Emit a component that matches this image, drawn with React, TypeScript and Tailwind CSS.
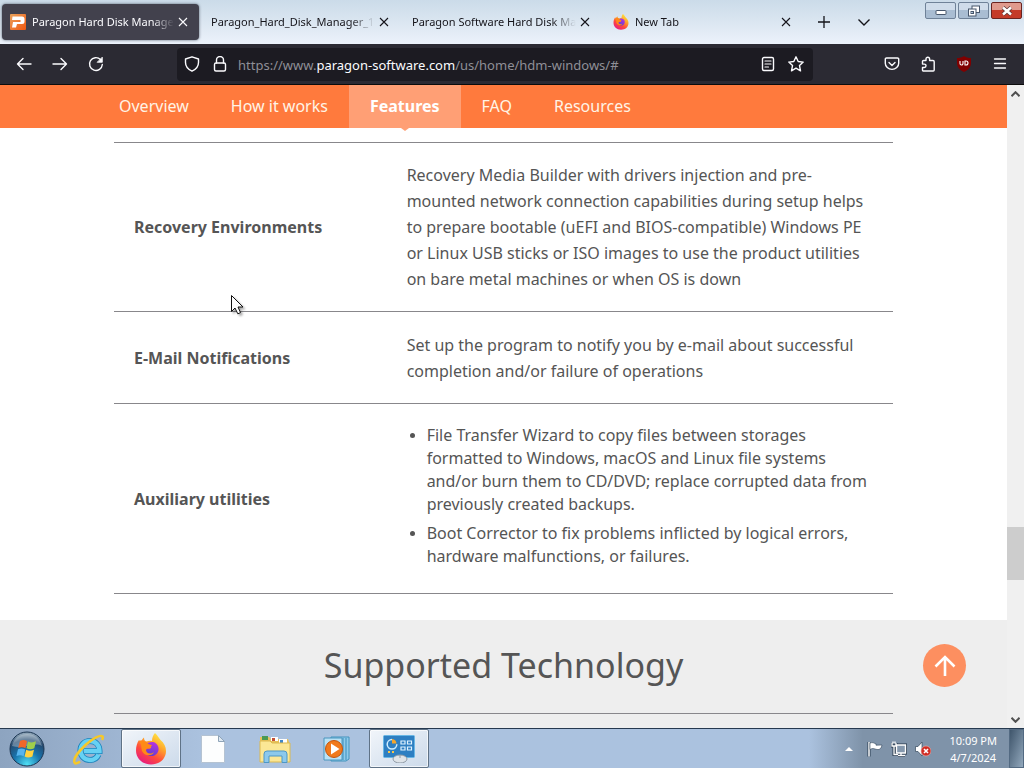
import React from "react";

const tabs = [
  { title: "Paragon Hard Disk Manager", icon: "paragon", active: true },
  { title: "Paragon_Hard_Disk_Manager_1", icon: "", active: false },
  { title: "Paragon Software Hard Disk Ma", icon: "", active: false },
  { title: "New Tab", icon: "firefox", active: false },
];

const navItems = ["Overview", "How it works", "Features", "FAQ", "Resources"];

function ParagonIcon() {
  return (
    <svg viewBox="0 0 16 16" className="size-4 shrink-0" aria-hidden="true">
      <defs>
        <linearGradient id="pg" x1="0" y1="0" x2="1" y2="1">
          <stop offset="0" stopColor="#e9a25c" />
          <stop offset="1" stopColor="#f1560f" />
        </linearGradient>
      </defs>
      <rect width="16" height="16" rx="1" fill="url(#pg)" />
      <path d="M2.500 2.500h9.500a2.500 2.500 0 0 1 2.500 2.500v2.500a2.500 2.500 0 0 1-2.500 2.500H7L6 13.500H2L3 8h7.500V6H2z" fill="#fff" />
    </svg>
  );
}

function FirefoxIcon({ className, id }: { className: string; id: string }) {
  return (
    <svg viewBox="0 0 32 32" className={className} aria-hidden="true">
      <defs>
        <linearGradient id={id + "a"} x1="0.8" y1="0" x2="0.2" y2="1">
          <stop offset="0" stopColor="#fff04a" />
          <stop offset="0.35" stopColor="#ffa42a" />
          <stop offset="0.65" stopColor="#ff4a3c" />
          <stop offset="1" stopColor="#e3158a" />
        </linearGradient>
        <linearGradient id={id + "b"} x1="0.7" y1="0" x2="0.3" y2="1">
          <stop offset="0" stopColor="#b833e1" />
          <stop offset="1" stopColor="#5b3fd0" />
        </linearGradient>
      </defs>
      <path d="M20 0c3 3 4 5 5.500 7 3.500 3 5.500 6.500 5.500 11 0 8-6.500 13.500-15 13.500S1 25.500 1 17.500c0-4 1-7.500 3-10.500l1.500 2.500C6.500 7.500 7.500 5.500 9 4.500c0 2 .5 3 2 4 2 0 4-1 6-.5C17 5 18 2 20 0z" fill={"url(#" + id + "a)"} />
      <path d="M11 12c2-3 7-4 10-1.500 3 2.500 3.500 7 1 10s-7 3.500-10 1C10 20 9 17 10 15l4 1c2-.5 2.500-1.500 2-2.500-2 0-4 0-5-1.500z" fill={"url(#" + id + "b)"} />
      <path d="M4 8c2-1 5 0 7 1 2 2 4 3 6 3-1 3-5 3-6 5 0 3 4 5 8 2-2 5-10 4-12-1-1-4 0-6-3-10z" fill="#ff8a16" />
    </svg>
  );
}

function CloseIcon() {
  return (
    <svg viewBox="0 0 10 10" className="size-2.5" aria-hidden="true">
      <path d="M1 1l8 8M9 1L1 9" stroke="currentColor" strokeWidth="1.100" fill="none" />
    </svg>
  );
}

function ToolIcon({ children }: { children: React.ReactNode }) {
  return (
    <svg viewBox="0 0 16 16" className="size-4 shrink-0" fill="none" stroke="currentColor" strokeWidth="1.400" strokeLinecap="round" strokeLinejoin="round" aria-hidden="true">
      {children}
    </svg>
  );
}

function ToolButton({ label, children }: { label: string; children: React.ReactNode }) {
  return (
    <button aria-label={label} className="flex h-8 w-9 items-center justify-center">
      {children}
    </button>
  );
}

function TabStrip() {
  return (
    <header className="flex h-11 shrink-0 bg-linear-to-b from-[#cbdbe9] via-[#dbe6f1] to-[#ecf2fb]">
      <div className="flex">
        {tabs.map((tab) => (
          <div key={tab.title} className="w-[201px] px-0.5 py-1">
            <div className={tab.active ? "flex h-9 items-center rounded bg-[#42414d] pr-[11px] pl-2 text-[#fbfbfe] shadow-[0_0_3px_#56606f]" : "flex h-9 items-center pr-[11px] pl-2 text-[#15141a]"}>
              {tab.icon === "paragon" && <ParagonIcon />}
              {tab.icon === "firefox" && <FirefoxIcon className="size-4 shrink-0" id="fft" />}
              <button className={tab.icon ? "ml-1.5 min-w-0 flex-1 overflow-hidden mask-r-from-85% mask-r-to-100% text-left text-[11px] leading-4 whitespace-nowrap" : "min-w-0 flex-1 overflow-hidden mask-r-from-85% mask-r-to-100% text-left text-[11px] leading-4 whitespace-nowrap"}>
                {tab.title}
              </button>
              <button aria-label="Close tab" className="ml-1 shrink-0">
                <CloseIcon />
              </button>
            </div>
          </div>
        ))}
      </div>
      <button aria-label="New tab" className="flex w-10 items-center justify-center text-[#15141a]">
        <svg viewBox="0 0 12 12" className="size-3" aria-hidden="true"><path d="M6 0v12M0 6h12" stroke="currentColor" strokeWidth="1.300" /></svg>
      </button>
      <button aria-label="List all tabs" className="flex w-10 items-center justify-center text-[#15141a]">
        <svg viewBox="0 0 12 12" className="size-3" fill="none" aria-hidden="true"><path d="M0.500 3.500L6 9l5.500-5.500" stroke="currentColor" strokeWidth="1.400" /></svg>
      </button>
      <div className="mr-0.5 ml-auto flex gap-0.5 pt-0.5">
        <button aria-label="Minimize" className="flex h-[17px] w-[31px] items-center justify-center rounded-xs border border-[#6f8298] bg-linear-to-b from-[#cfdcea] from-50% to-[#a9bdd2] to-50%">
          <svg viewBox="0 0 12 12" className="size-3" aria-hidden="true"><rect x="1" y="5.500" width="10" height="4" rx="0.500" fill="#fff" stroke="#46566b" /></svg>
        </button>
        <button aria-label="Restore" className="flex h-[17px] w-[31px] items-center justify-center rounded-xs border border-[#6f8298] bg-linear-to-b from-[#cfdcea] from-50% to-[#a9bdd2] to-50%">
          <svg viewBox="0 0 12 12" className="size-3" aria-hidden="true"><rect x="4" y="1" width="7.500" height="6.500" fill="#fff" stroke="#46566b" /><rect x="0.500" y="4" width="7.500" height="7" fill="#fff" stroke="#46566b" /><rect x="3" y="6.500" width="2.500" height="2" fill="#a9bdd2" stroke="#46566b" /></svg>
        </button>
        <button aria-label="Close" className="flex h-[17px] w-[31px] items-center justify-center rounded-xs border border-[#6b2420] bg-linear-to-b from-[#e09a8d] from-50% to-[#c43a28] to-50%">
          <svg viewBox="0 0 12 12" className="size-3" aria-hidden="true"><path d="M2 2.500l8 7M10 2.500l-8 7" stroke="#5b3434" strokeWidth="4" /><path d="M2 2.500l8 7M10 2.500l-8 7" stroke="#fff" strokeWidth="2.500" /></svg>
        </button>
      </div>
    </header>
  );
}

function Toolbar() {
  return (
    <div className="flex h-[41px] shrink-0 items-center border-b border-[#0c0c0d] bg-[#2b2a33] px-1.5 text-[#fbfbfe]">
      <ToolButton label="Back"><ToolIcon><path d="M15 8H1.500M7 2.500L1.500 8 7 13.500" /></ToolIcon></ToolButton>
      <ToolButton label="Forward"><ToolIcon><path d="M1 8h13.500M9 2.500L14.500 8 9 13.500" /></ToolIcon></ToolButton>
      <ToolButton label="Reload"><ToolIcon><path d="M14.300 8.500A6.400 6.400 0 1 1 12.500 3.600" /><path d="M14.300 1.500v4.800H9.500z" fill="currentColor" strokeWidth="0.800" /></ToolIcon></ToolButton>
      <div className="mr-[61px] ml-[63px] flex h-[33px] min-w-0 flex-1 items-center rounded bg-[#1c1b22] px-[7px]">
        <ToolIcon><path d="M8 0.800L14.500 3v3.500c0 4-2.800 7-6.500 8.700C4.300 13.500 1.500 10.500 1.500 6.500V3z" /></ToolIcon>
        <span className="ml-3 flex">
          <ToolIcon><rect x="2.500" y="7" width="11" height="8" rx="1.500" /><path d="M4.500 7V4a3.500 3.500 0 0 1 7 0v3" /></ToolIcon>
        </span>
        <div role="textbox" aria-label="Address" contentEditable suppressContentEditableWarning className="ml-2.5 min-w-0 flex-1 overflow-hidden pt-0.5 text-[13px] leading-5 whitespace-nowrap text-[#8f8f97] outline-none">
          https://www.<span className="text-[#fbfbfe]">paragon-software.com</span>/us/home/hdm-windows/#
        </div>
        <button aria-label="Reader view" className="mr-3">
          <ToolIcon><rect x="2.500" y="1.500" width="11" height="13" rx="1.500" /><path d="M5 5h6M5 8h6M5 11h3.500" strokeWidth="1.200" /></ToolIcon>
        </button>
        <button aria-label="Bookmark" className="mr-0.5">
          <ToolIcon><path d="M8 0.800l2.200 4.700 5 .6-3.700 3.500 1 5.200L8 12.200l-4.500 2.600 1-5.200L.8 6.100l5-.6z" /></ToolIcon>
        </button>
      </div>
      <ToolButton label="Pocket"><ToolIcon><path d="M2.500 2h11a1.200 1.200 0 0 1 1.200 1.200v4a6.700 6.200 0 0 1-13.400 0v-4A1.200 1.200 0 0 1 2.500 2z" /><path d="M5 6.500l3 3 3-3" /></ToolIcon></ToolButton>
      <ToolButton label="Extensions"><ToolIcon><path d="M6 4.500V3a1.800 1.800 0 0 1 3.600 0v1.500H13a1.200 1.200 0 0 1 1.200 1.200V14a1 1 0 0 1-1 1H3.500a1 1 0 0 1-1-1v-2.500h1.800a1.700 1.700 0 0 0 0-3.400H2.500V5.500a1 1 0 0 1 1-1z" /></ToolIcon></ToolButton>
      <ToolButton label="uBlock Origin">
        <svg viewBox="0 0 16 16" className="size-4" aria-hidden="true">
          <path d="M8 0c2 1.500 4.500 2 7 2v5c0 4.500-3 7-7 9-4-2-7-4.500-7-9V2c2.500 0 5-.5 7-2z" fill="#800000" />
          <path d="M4 5v2.500a1.500 1.500 0 0 0 3 0V5M9 5v4h1a2 2 0 0 0 0-4z" fill="none" stroke="#fff" strokeWidth="1.100" />
        </svg>
      </ToolButton>
      <ToolButton label="Menu"><ToolIcon><path d="M2.500 3h11M2.500 7.500h11M2.500 12h11" strokeWidth="1.300" /></ToolIcon></ToolButton>
    </div>
  );
}

function SiteNav() {
  return (
    <nav className="flex h-[43px] bg-[#ff7a3d] px-[98px] text-base text-[#fff4e6]">
      {navItems.map((item) =>
        item === "Features" ? (
          <a key={item} href="#features" className="relative flex items-center bg-[#ff9f75] px-[21px] pb-0.5 font-bold text-white">
            {item}
            <svg viewBox="0 0 8 4" className="absolute top-full left-1/2 h-1 w-2 -translate-x-1/2" aria-hidden="true"><path d="M0 0h8L4 3z" fill="#ff9f75" /></svg>
          </a>
        ) : (
          <a key={item} href="#section" className="flex items-center px-[21px] pb-0.5">{item}</a>
        )
      )}
    </nav>
  );
}

function FeatureRow({ title, children }: { title: string; children: React.ReactNode }) {
  return (
    <tr className="h-[92px] border-y border-[#88878b]">
      <th scope="row" className="w-[35%] px-5 py-[19px] text-left font-bold">{title}</th>
      <td className="px-5 py-[19px] leading-[26px]">{children}</td>
    </tr>
  );
}

function Page() {
  return (
    <main className="relative min-w-0 flex-1 overflow-hidden bg-white text-base text-[#555]">
      <SiteNav />
      <div className="px-[114px] pt-3.5 pb-[26px]">
        <table className="w-full border-collapse">
          <tbody>
            <FeatureRow title="Recovery Environments">
              Recovery Media Builder with drivers injection and pre-mounted network connection capabilities during setup helps to prepare bootable (uEFI and BIOS-compatible) Windows PE or Linux USB sticks or ISO images to use the product utilities on bare metal machines or when OS is down
            </FeatureRow>
            <FeatureRow title="E-Mail Notifications">
              Set up the program to notify you by e-mail about successful completion and/or failure of operations
            </FeatureRow>
            <FeatureRow title="Auxiliary utilities">
              <ul className="list-disc pt-px pl-5 leading-[23px] marker:text-sm">
                <li className="mb-1.5">File Transfer Wizard to copy files between storages formatted to Windows, macOS and Linux file systems and/or burn them to CD/DVD; replace corrupted data from previously created backups.</li>
                <li className="mb-1.5">Boot Corrector to fix problems inflicted by logical errors, hardware malfunctions, or failures.</li>
              </ul>
            </FeatureRow>
          </tbody>
        </table>
      </div>
      <section className="bg-[#eee] px-[114px] pt-5">
        <h2 className="text-center text-[34px] leading-[50px]">Supported Technology</h2>
        <div className="mt-[23px] h-40 border-t border-[#88878b] px-5 pt-2">
          <b className="font-bold text-black">A</b>
        </div>
      </section>
      <button aria-label="Back to top" className="absolute right-[41px] bottom-[41px] flex size-[43px] items-center justify-center rounded-full bg-[#fd8f60]">
        <svg viewBox="0 0 24 24" className="size-6" fill="none" stroke="#fff" strokeWidth="2.600" aria-hidden="true"><path d="M12 22V3M2.500 12.500L12 3l9.500 9.500" /></svg>
      </button>
      <svg viewBox="0 0 14 20" className="absolute top-[210px] left-[231px] h-5 w-3.5 drop-shadow-[2px_2px_1px_#0005]" aria-hidden="true">
        <path d="M0.500 0.500v16l3.500-3.500 2.800 5.800 2.700-1.200L7 12h5z" fill="#fff" stroke="#111" />
      </svg>
    </main>
  );
}

function ScrollBar() {
  return (
    <div className="flex w-[17px] shrink-0 flex-col items-center bg-[#f0f0f0] text-[#505050]">
      <button aria-label="Scroll up" className="flex h-[17px] w-full items-center justify-center">
        <svg viewBox="0 0 9 6" className="h-1.5 w-[9px]" fill="none" stroke="currentColor" strokeWidth="2" aria-hidden="true"><path d="M0.500 5.200l4-4 4 4" /></svg>
      </button>
      <div className="grow-[425]" />
      <div className="h-[53px] w-full bg-[#cdcdcd]" />
      <div className="grow-[131]" />
      <button aria-label="Scroll down" className="flex h-[17px] w-full items-center justify-center">
        <svg viewBox="0 0 9 6" className="h-1.5 w-[9px]" fill="none" stroke="currentColor" strokeWidth="2" aria-hidden="true"><path d="M0.500 0.800l4 4 4-4" /></svg>
      </button>
    </div>
  );
}

const taskButton = "flex h-[39px] w-[60px] items-center justify-center";
const taskButtonActive = "flex h-[39px] w-[60px] items-center justify-center rounded-xs border border-[#5f7286] bg-linear-to-br from-[#f1f5fa] to-[#ccdaea] shadow-[inset_0_0_0_1px_#ffffffaa]";

function Taskbar() {
  return (
    <footer className="flex h-10 shrink-0 border-t border-[#26394f] bg-linear-to-r from-[#8da4c0] via-[#abc2df] via-20% to-[#abc2df] to-79%">
      <button aria-label="Start" className="flex w-[54px] items-center justify-center">
        <svg viewBox="0 0 36 36" className="size-9" aria-hidden="true">
          <defs>
            <radialGradient id="orb" cx="0.5" cy="0.95" r="0.9">
              <stop offset="0" stopColor="#4fe0f5" />
              <stop offset="0.45" stopColor="#1874ad" />
              <stop offset="0.8" stopColor="#244a70" />
              <stop offset="1" stopColor="#8ba2b5" />
            </radialGradient>
          </defs>
          <circle cx="18" cy="18" r="17" fill="url(#orb)" stroke="#1b3551" />
          <path d="M3 15C5 7 11 3 18 3s13 4 15 12c-8-5-18 4-30 0z" fill="#fff" opacity="0.300" />
          <path d="M11 10c3-1.500 5-1 7 .2l-1.500 7c-2-1.200-4.500-1.500-7.300-.3z" fill="#f0672a" />
          <path d="M19 10.500c2.500 1.200 5 1.200 8-.2l-1.700 7c-2.800 1.300-5.300 1.200-7.800 0z" fill="#9fce4a" />
          <path d="M9 18.200c3-1.200 5-.8 7.200.3l-1.600 6.800c-2-1.200-4.500-1.300-7.200-.2z" fill="#55b4ee" />
          <path d="M17.200 18.800c2.500 1.200 5 1.200 7.800 0l-1.600 6.800c-3 1.300-5.300 1.200-7.800 0z" fill="#ffd23f" />
        </svg>
      </button>
      <div className="ml-[5px] flex gap-0.5">
        <button aria-label="Internet Explorer" className={taskButton}>
          <svg viewBox="0 0 32 32" className="size-8" fill="none" aria-hidden="true">
            <path d="M25.500 21.500c-1.500 3.500-4.500 5.500-8.500 5.500-5.500 0-9.500-4-9.500-9.500S11.500 8 17 8s9.500 4 9.500 10H11" stroke="#1b83bc" strokeWidth="6" />
            <path d="M25.500 21.500c-1.500 3.500-4.500 5.500-8.500 5.500-5.500 0-9.500-4-9.500-9.500S11.500 8 17 8s9.500 4 9.500 10H11" stroke="#66d1f3" strokeWidth="4.400" />
            <path d="M7 28.500c-2.500 2-5 2.500-5.500 1C0 26 6 18 13 11.500S27.500 1.500 29.500 3.500c.6.700.3 2-.5 3.500" stroke="#f6c829" strokeWidth="2.500" />
          </svg>
        </button>
        <button aria-label="Firefox" className={taskButtonActive}><FirefoxIcon className="size-8" id="ffb" /></button>
        <button aria-label="Document" className={taskButton}>
          <svg viewBox="0 0 24 28" className="h-7 w-6" aria-hidden="true"><path d="M0.500 0.500h17l6 6v21H0.500z" fill="#fdfefe" stroke="#b5c3d2" /><path d="M17.500 0.500v6h6z" fill="#dfe9f2" stroke="#8fa4b8" /></svg>
        </button>
        <button aria-label="Windows Explorer" className={taskButton}>
          <svg viewBox="0 0 32 28" className="h-7 w-8" aria-hidden="true">
            <path d="M1 2h9l2 2h17l1 3v18H1z" fill="#e8c25a" />
            <path d="M3 1h6v4H3z" fill="#4a9a54" /><path d="M12 2h7v4h-7z" fill="#fff" /><path d="M13 3h3v3h-3z" fill="#c24f36" /><path d="M20 4h8v4h-8z" fill="#fff" /><path d="M21 5h3v3h-3z" fill="#3f86c8" />
            <path d="M1 6h10l2 2h18v19H1z" fill="#fbe795" stroke="#dbb951" />
            <path d="M5 27.500V19q0-3 3-3h17q3 0 3 3v8.500h-5V21H10v6.500z" fill="#8cc9ec" stroke="#4d97c7" />
          </svg>
        </button>
        <button aria-label="Media Player" className={taskButton}>
          <svg viewBox="0 0 28 26" className="h-[26px] w-7" aria-hidden="true">
            <path d="M8 1h18v22l-3 2H8z" fill="#8fcbea" stroke="#4293bd" /><path d="M23 2v22M20 2v22" stroke="#3d8dbb" />
            <path d="M1 2h18v22H1z" fill="#b9e1f4" stroke="#4b96be" />
            <circle cx="11" cy="13" r="8.500" fill="#f17a1c" stroke="#c5540d" /><path d="M8 7.500l8.500 5.500L8 18.500z" fill="#fff" />
          </svg>
        </button>
        <button aria-label="Control Panel" className={taskButtonActive}>
          <svg viewBox="0 0 32 28" className="h-7 w-8" fill="none" aria-hidden="true">
            <rect x="0.500" y="0.500" width="31" height="22" rx="1" fill="#2e7fc2" stroke="#69b7e5" />
            <path d="M9 4.500a4.800 4.800 0 1 0 4.800 4.800" stroke="#cfeeff" strokeWidth="1.500" /><path d="M9 4a5 5 0 0 1 4.500 4.500L9 8.500z" fill="#f6a62c" />
            <path d="M18 6h4v3h-4zM24.500 6h4v3h-4zM18 12h4v3h-4zM24.500 12h4v3h-4z" stroke="#dff3ff" strokeWidth="1.200" />
            <path d="M5 17h2M9 17h2" stroke="#f9c649" strokeWidth="2" />
            <ellipse cx="17" cy="24" rx="7" ry="4" fill="#dfe4e9" stroke="#8f9aa5" /><path d="M17 20v3" stroke="#8f9aa5" />
          </svg>
        </button>
      </div>
      <div className="ml-auto flex items-center bg-linear-to-r from-transparent to-[#7f93a9] to-25% pl-8 text-white">
        <button aria-label="Show hidden icons" className="mr-2.5 flex w-4 justify-center">
          <svg viewBox="0 0 8 4" className="h-1 w-2" aria-hidden="true"><path d="M0 4l4-4 4 4z" fill="#fff" /></svg>
        </button>
        <svg viewBox="0 0 16 16" className="mr-2 size-4" aria-hidden="true"><path d="M2 1v14.500" stroke="#26384c" strokeWidth="3" /><path d="M2 1v14.500" stroke="#fff" strokeWidth="1.500" /><path d="M3 2c3-1.200 4 .5 6 .8v1.400l6-.2c-.6 3-2 5-5 4.500L8 8C6 7 5 7.500 3 8.500z" fill="#fff" stroke="#33475c" strokeWidth="0.600" /></svg>
        <svg viewBox="0 0 16 16" className="mr-2 size-4" fill="none" aria-hidden="true">
          <path d="M5.500 4h9v8h-9zM7 14.500h7M10 12v2M1 2v3h4V2M3 5v8.500h4" stroke="#27394c" strokeWidth="3" />
          <path d="M5.500 4h9v8h-9z" fill="#8598ad" stroke="#fff" strokeWidth="1.400" />
          <path d="M7 14.500h7M10 12v2M1 2v3h4V2M2 .5v2M4 .5v2M3 5v8.500h4" stroke="#fff" strokeWidth="1.300" />
        </svg>
        <svg viewBox="0 0 16 16" className="mr-[18px] size-4" aria-hidden="true"><path d="M0.500 5.500h2.500L7 1v14L3 10.500H.5z" fill="#fff" stroke="#33475c" strokeWidth="0.700" /><circle cx="11" cy="10" r="5" fill="#d12d24" stroke="#f0b3ac" strokeWidth="0.600" /><path d="M9 8l4 4M13 8l-4 4" stroke="#fff" strokeWidth="1.600" /></svg>
        <time className="text-center text-[11px] leading-[17px]">10:09 PM<br />4/7/2024</time>
        <button aria-label="Show desktop" className="ml-3 h-full w-[15px] border border-[#536a82] bg-linear-to-br from-[#40566c] to-[#93a9bd]" />
      </div>
    </footer>
  );
}

export default function App() {
  return (
    <div className="flex h-screen flex-col overflow-hidden font-['Noto_Sans','Open_Sans',sans-serif]">
      <TabStrip />
      <Toolbar />
      <div className="flex min-h-0 flex-1">
        <Page />
        <ScrollBar />
      </div>
      <Taskbar />
    </div>
  );
}
